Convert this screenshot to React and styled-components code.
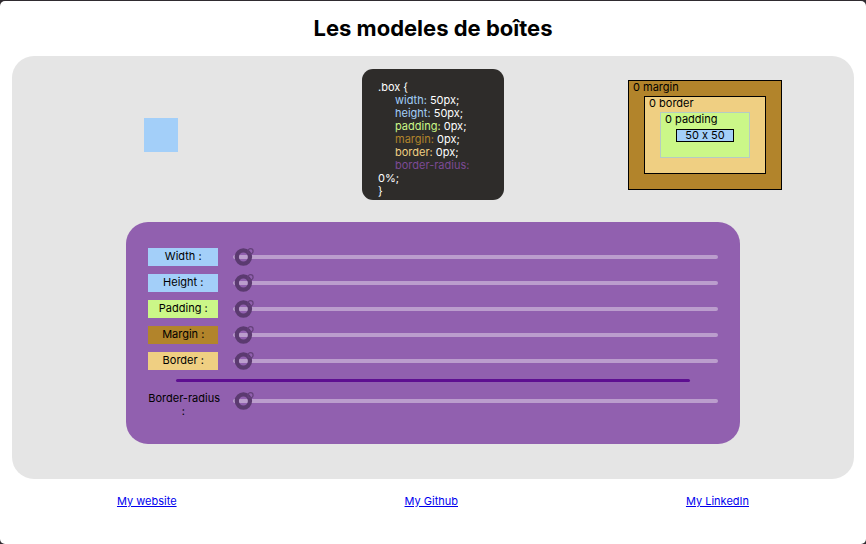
import React, { useState } from "react";
import styled, { createGlobalStyle } from "styled-components";

const colors = {
  content: "#a3cff9",
  padding: "#cbf788",
  margin: "#b2842b",
  border: "#efcf82",
  radius: "#7c4a94",
};

const GlobalStyle = createGlobalStyle`
  *, *::before, *::after { box-sizing: border-box; }
  html { background: #2f2b30; }
  body {
    margin: 0;
    font-family: Inter, "Liberation Sans", sans-serif;
    font-size: 11px;
    line-height: 13px;
    font-variant-ligatures: no-contextual;
    color: #000;
  }
`;

const Page = styled.div`
  display: flow-root;
  margin-top: 1px;
  min-height: calc(100vh - 1px);
  background: #fff;
  border-radius: 5px;
`;

const Title = styled.h1`
  margin: 14px 0;
  font-size: 22px;
  line-height: 27px;
  font-weight: 700;
  text-align: center;
`;

const Panel = styled.main`
  margin: 0 12px;
  padding: 13px 12px 35px;
  background: #e5e5e5;
  border-radius: 22px;
`;

const Showcase = styled.section`
  display: grid;
  grid-template-columns: repeat(3, 1fr);
  place-items: center;
  margin-bottom: 22px;
  padding: 0 1px;
`;

const Sample = styled.div`
  width: 34px;
  height: 34px;
  background: ${colors.content};
`;

const CodeCard = styled.code`
  display: block;
  width: 142px;
  padding: 12px 18px 2px 16px;
  background: #2e2c2a;
  border-radius: 11px;
  color: #fff;
  font-family: inherit;
  font-size: 11px;
`;

const CodeLine = styled.div`
  text-indent: ${(p) => (p.$indent ? "17px" : "0")};
`;

const Property = styled.span`
  color: ${(p) => p.$color};
`;

const Layer = styled.div`
  padding-bottom: 15px;
  border: 1px solid ${(p) => p.$line || "#000"};
  background: ${(p) => p.$color};

  & & {
    margin: 0 15px;
  }
`;

const Diagram = styled.div`
  width: 154px;
`;

const LayerName = styled.div`
  padding-left: 4px;
  height: 15px;
`;

const Core = styled.div`
  margin: 1px 15px 0;
  border: 1px solid #000;
  background: ${colors.content};
  line-height: 11px;
  text-align: center;
`;

const Controls = styled.form`
  width: 75%;
  margin: 0 auto;
  padding: 26px 22px;
  background: #9160af;
  border-radius: 22px;
`;

const Rows = styled.div`
  display: grid;
  gap: 8px;
`;

const Row = styled.div`
  display: flex;
  align-items: flex-start;
  gap: 15px;
`;

const Label = styled.label`
  flex: 0 0 70px;
  min-width: 0;
  padding: ${(p) => (p.$color ? "2px 0 3px" : "0")};
  background: ${(p) => p.$color || "transparent"};
  text-align: center;
`;

const LabelName = styled.span`
  white-space: nowrap;
`;

const thumb = `url("data:image/svg+xml,%3Csvg xmlns='http://www.w3.org/2000/svg' width='22' height='18' fill='none' stroke='%235b3a70'%3E%3Ccircle cx='10.4' cy='9' r='6.6' stroke-width='4.2'/%3E%3Ccircle cx='17.5' cy='3.2' r='2.6' stroke-width='1.2' stroke='%2365407b'/%3E%3C/svg%3E")`;

const Slider = styled.input`
  flex: 1;
  min-width: 0;
  height: 18px;
  margin: 0;
  appearance: none;
  background: transparent;
  cursor: pointer;

  &::-webkit-slider-runnable-track {
    height: 4px;
    border-radius: 2px;
    background: #bb9dcd;
  }
  &::-webkit-slider-thumb {
    appearance: none;
    width: 22px;
    height: 18px;
    margin-top: -7px;
    background: ${thumb} no-repeat;
  }
`;

const Divider = styled.hr`
  height: 3px;
  margin: 9px 28px 10px;
  border: 0;
  border-radius: 2px;
  background: #5e0f91;
`;

const Footer = styled.footer`
  display: flex;
  justify-content: space-around;
  padding: 16px 3px;
`;

const Link = styled.a`
  color: #0000ee;
`;

const fields = [
  { id: "width", label: "Width", color: colors.content, base: 50, unit: "px" },
  { id: "height", label: "Height", color: colors.content, base: 50, unit: "px" },
  { id: "padding", label: "Padding", color: colors.padding, base: 0, unit: "px" },
  { id: "margin", label: "Margin", color: colors.margin, base: 0, unit: "px" },
  { id: "border", label: "Border", color: colors.border, base: 0, unit: "px" },
];
const radiusField = { id: "border-radius", label: "Border-radius", base: 0, unit: "%" };
const codeColors = { "border-radius": colors.radius };

function Field({ field, value, onChange }) {
  return (
    <Row>
      <Label htmlFor={field.id} $color={field.color}>
        <LabelName>{field.label}</LabelName> :
      </Label>
      <Slider
        id={field.id}
        type="range"
        min={field.base}
        max={field.base + 50}
        value={value}
        onChange={(e) => onChange(field.id, Number(e.target.value))}
      />
    </Row>
  );
}

export default function App() {
  const all = [...fields, radiusField];
  const [values, setValues] = useState(() =>
    Object.fromEntries(all.map((f) => [f.id, f.base]))
  );
  const change = (id, value) => setValues((v) => ({ ...v, [id]: value }));

  return (
    <>
      <GlobalStyle />
      <Page>
        <Title>Les modeles de boîtes</Title>
        <Panel>
          <Showcase>
            <Sample />
            <CodeCard>
              <CodeLine>{".box {"}</CodeLine>
              {all.map((f) => (
                <CodeLine key={f.id} $indent>
                  <Property $color={f.color || codeColors[f.id]}>{f.id}:</Property>{" "}
                  {values[f.id]}
                  {f.unit};
                </CodeLine>
              ))}
              <CodeLine>{"}"}</CodeLine>
            </CodeCard>
            <Diagram>
              <Layer $color={colors.margin}>
                <LayerName>{values.margin} margin</LayerName>
                <Layer $color={colors.border}>
                  <LayerName>{values.border} border</LayerName>
                  <Layer $color={colors.padding} $line="#b5cbc4">
                    <LayerName>{values.padding} padding</LayerName>
                    <Core>
                      {values.width} x {values.height}
                    </Core>
                  </Layer>
                </Layer>
              </Layer>
            </Diagram>
          </Showcase>
          <Controls>
            <Rows>
              {fields.map((f) => (
                <Field key={f.id} field={f} value={values[f.id]} onChange={change} />
              ))}
            </Rows>
            <Divider />
            <Field
              field={radiusField}
              value={values["border-radius"]}
              onChange={change}
            />
          </Controls>
        </Panel>
        <Footer>
          <Link href="#website">My website</Link>
          <Link href="#github">My Github</Link>
          <Link href="#linkedin">My LinkedIn</Link>
        </Footer>
      </Page>
    </>
  );
}
